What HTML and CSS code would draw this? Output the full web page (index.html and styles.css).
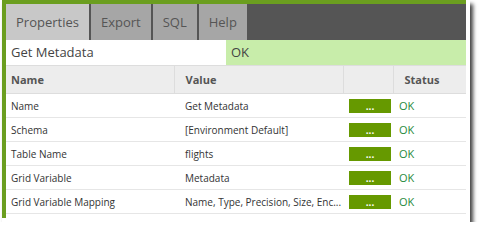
FILE: index.html
```html
<!DOCTYPE html>
<html lang="en">
<head>
  <meta charset="UTF-8" />
  <title>Get Metadata | Properties</title>
  <link rel="stylesheet" href="styles.css">
</head>
<body>
  <div class="paper">
    <div class="panel">
      <ul class="tabs">
        <li class="active">Properties</li>
        <li>Export</li>
        <li>SQL</li>
        <li>Help</li>
      </ul>

      <div class="title-row">
        <div class="title">Get Metadata</div>
        <div class="state">OK</div>
      </div>

      <table class="props">
        <colgroup>
          <col class="c-name">
          <col class="c-value">
          <col class="c-btn">
          <col class="c-status">
        </colgroup>
        <thead>
          <tr>
            <th>Name</th>
            <th>Value</th>
            <th></th>
            <th>Status</th>
          </tr>
        </thead>
        <tbody>
          <tr>
            <td>Name</td>
            <td>Get Metadata</td>
            <td><button class="edit-btn">...</button></td>
            <td class="ok">OK</td>
          </tr>
          <tr>
            <td>Schema</td>
            <td>[Environment Default]</td>
            <td><button class="edit-btn">...</button></td>
            <td class="ok">OK</td>
          </tr>
          <tr>
            <td>Table Name</td>
            <td>flights</td>
            <td><button class="edit-btn">...</button></td>
            <td class="ok">OK</td>
          </tr>
          <tr>
            <td>Grid Variable</td>
            <td>Metadata</td>
            <td><button class="edit-btn">...</button></td>
            <td class="ok">OK</td>
          </tr>
          <tr>
            <td>Grid Variable Mapping</td>
            <td>Name, Type, Precision, Size, Enc...</td>
            <td><button class="edit-btn">...</button></td>
            <td class="ok">OK</td>
          </tr>
        </tbody>
      </table>
    </div>
  </div>
</body>
</html>
```

FILE: styles.css
```css
body { margin: 0; font-family: "Open Sans", Arial, sans-serif; background: white; }

.paper {
  margin-left: 2px;
  width: 468px;
  height: 222px;
  background: white;
  box-shadow: 3px 4px 4px rgba(0,0,0,0.75);
}

.panel {
  width: 460px;
  height: 214px;
  border-left: 4px solid #6b9e1f;
  border-top: 4px solid #6b9e1f;
}

.tabs {
  list-style: none;
  margin: 0;
  padding: 0;
  display: flex;
  gap: 2px;
  height: 36px;
  background: #555;
}
.tabs li {
  background: #a6a6a6;
  color: #555;
  font-size: 13px;
  line-height: 36px;
  padding: 0 10px;
}
.tabs li.active { background: #c8c8c8; }

.title-row {
  display: flex;
  height: 25px;
  font-size: 13px;
  line-height: 25px;
  color: #444;
  border-bottom: 1px solid #ddd;
}
.title-row .title { width: 215px; padding-left: 5px; background: white; }
.title-row .state { flex: 1; padding-left: 5px; background: #c8edaa; }

.props {
  width: 460px;
  border-collapse: collapse;
  table-layout: fixed;
  font-size: 10px;
  color: #333;
}
.props .c-name { width: 168px; }
.props .c-value { width: 169px; }
.props .c-btn { width: 50px; }
.props .c-status { width: 73px; }

.props th {
  height: 27px;
  background: #ededed;
  color: #555;
  font-size: 11px;
  font-weight: bold;
  text-align: left;
  padding: 0 0 0 5px;
  border-left: 1px solid #ddd;
  border-bottom: 1px solid #ddd;
}
.props th:first-child { border-left: none; }
.props th:nth-child(2) { padding-left: 11px; }
.props th:nth-child(4) { padding-left: 11px; }

.props td {
  height: 23px;
  padding: 0 0 0 5px;
  border-bottom: 1px solid #e6e6e6;
  white-space: nowrap;
}
.props td:nth-child(2) { padding-left: 11px; }
.props td:nth-child(3) { padding-left: 6px; }
.props td:nth-child(4) { padding-left: 6px; }

.edit-btn {
  display: block;
  width: 42px;
  height: 14px;
  margin-top: 1px;
  padding: 0;
  border: none;
  background: #669900;
  color: white;
  font-family: "Open Sans", Arial, sans-serif;
  font-size: 10px;
  font-weight: bold;
  line-height: 14px;
  cursor: pointer;
}
.ok { color: #1f8a3c; font-size: 11px; }
```
